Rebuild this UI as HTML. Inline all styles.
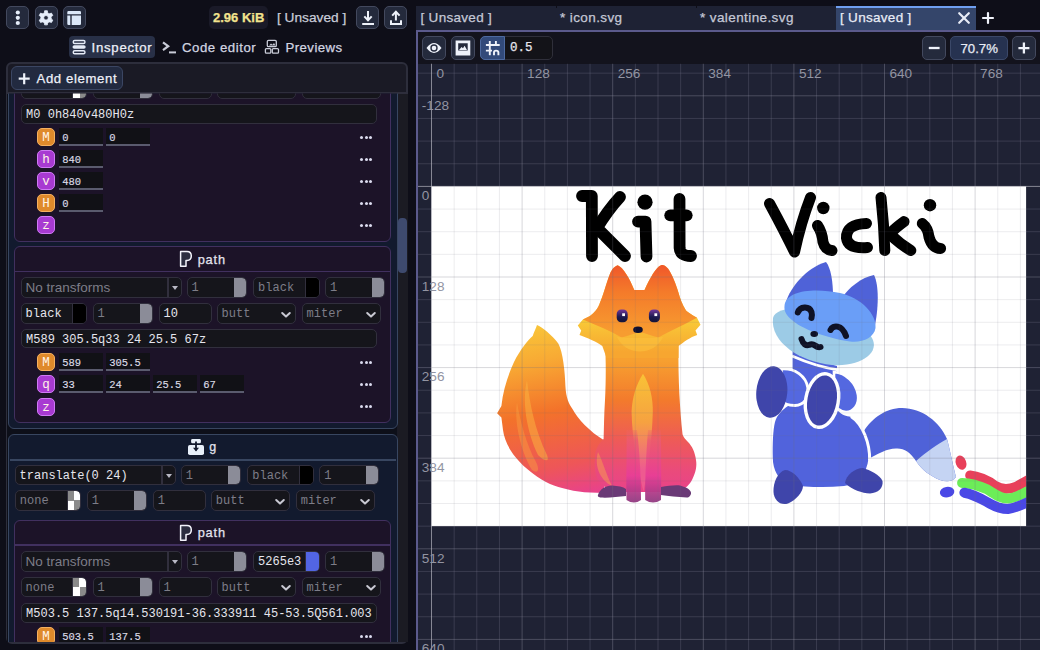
<!DOCTYPE html>
<html><head><meta charset="utf-8">
<style>
*{margin:0;padding:0;box-sizing:border-box}
html,body{width:1040px;height:650px;overflow:hidden;background:#0e0e18;font-family:"Liberation Sans",sans-serif}
.a{position:absolute}
.btn{position:absolute;background:#242a3c;border:1.5px solid #43495e;border-radius:5px}
.txt{position:absolute;white-space:nowrap;line-height:1;-webkit-text-stroke:0.25px currentColor}
.mono{font-family:"Liberation Mono",monospace}
.fld{position:absolute;background:#15151b;border:1.5px solid #312f3d;border-radius:5px;overflow:hidden}
.fld span{position:absolute;top:4px;white-space:nowrap;line-height:1;font-family:"Liberation Mono",monospace;font-size:12px}
.fld span.sans{font-family:"Liberation Sans",sans-serif;font-size:13.5px;top:2.5px}
.fld .sw{position:absolute;top:0;bottom:0;border-left:1.5px solid #312f3d}
.fld .ck{background:conic-gradient(#fff 0 25%,#8a8a8a 0 50%,#fff 0 75%,#8a8a8a 0);background-size:100% 100%;border-radius:0 4px 4px 0}
.fld .hd{position:absolute;top:0;bottom:0;border-radius:0 4px 4px 0}
.fld .ddsep{position:absolute;right:12px;top:0;bottom:0;width:1.5px;background:#312f3d}
.fld .ddarr{position:absolute;right:3px;top:8px;width:0;height:0;border-left:3.2px solid transparent;border-right:3.2px solid transparent;border-top:4.5px solid #b8b8c4}
.fld .chev{position:absolute;right:3px;top:6.5px}
.num{position:absolute;background:#111116;border-bottom:2px solid #5a5b6e}
.num span{position:absolute;left:3.2px;top:4.6px;white-space:nowrap;line-height:1;font-family:"Liberation Mono",monospace;font-size:10.5px;color:#dcdce6;-webkit-text-stroke:0.15px currentColor}
.bdg{position:absolute;width:18px;height:18px;border-radius:5px;font-family:"Liberation Mono",monospace;font-size:12.5px;line-height:19px;text-align:center;color:#fff3e6}
.bm{background:#df8a2b;border:1.5px solid #f4b060}
.bp{background:#a83ad2;border:1.5px solid #cf7af5}
.dots{position:absolute;width:14px;height:4px}
.dots i{position:absolute;top:0;width:3.2px;height:3.2px;border-radius:50%;background:#dadaee}
.gel{position:absolute;background:#121a2e;border:1.8px solid #384660;border-radius:6px}
.pel{position:absolute;background:#1c1328;border:1.5px solid #41305f;border-radius:6px}
.ehdr{position:absolute;left:15px;width:375px;height:1.5px;background:#41305f}
.ghdr{position:absolute;left:9.5px;width:386px;height:1.8px;background:#384660}
</style></head><body>
<div class="a" style="left:0;top:0;width:1040px;height:650px;overflow:hidden">

<!-- ===== LEFT TOP BAR ===== -->
<div class="btn" style="left:6px;top:6px;width:23px;height:23px"></div>
<div class="btn" style="left:34.5px;top:6px;width:23px;height:23px"></div>
<div class="btn" style="left:62.5px;top:6px;width:23px;height:23px"></div>

<div class="a" style="left:209px;top:6px;width:59px;height:23px;background:#1a1a28;border-radius:5px"></div>
<div class="txt" style="left:213px;top:11px;font-size:13px;font-weight:bold;color:#f2e38e">2.96 KiB</div>
<div class="txt" style="left:277px;top:11px;font-size:13.7px;color:#c9ccd8">[ Unsaved ]</div>
<div class="btn" style="left:356px;top:6px;width:23px;height:23px"></div>
<div class="btn" style="left:384px;top:6px;width:23px;height:23px"></div>

<!-- tabs -->
<div class="a" style="left:69px;top:36px;width:86px;height:22px;background:#283047;border-radius:4px"></div>
<div class="txt" style="left:91.5px;top:41px;font-size:13.2px;letter-spacing:0.75px;color:#eef0f8">Inspector</div>
<div class="txt" style="left:182px;top:41px;font-size:13.2px;letter-spacing:0.55px;color:#d2d5e0">Code editor</div>
<div class="txt" style="left:285.5px;top:41px;font-size:13.2px;letter-spacing:0.45px;color:#d2d5e0">Previews</div>

<!-- inspector frame -->
<div class="a" style="left:6px;top:62.3px;width:402px;height:582px;background:#1a1a25;border:2px solid #2d2e3c;border-radius:6px"></div>
<div class="a" style="left:7px;top:92px;width:400px;height:1.5px;background:#2e2e3c"></div>
<div class="a" style="left:11px;top:66px;width:112px;height:23.5px;background:#222a40;border:1.5px solid #3b4663;border-radius:6px"></div>
<div class="txt" style="left:36.5px;top:72px;font-size:13.2px;letter-spacing:0.6px;color:#eef0f8">Add element</div>


<!-- icons top bar -->
<svg class="a" style="left:0;top:0" width="420" height="100" viewBox="0 0 420 100">
<g fill="#e6eefa"><circle cx="17.8" cy="12.5" r="2.1"/><circle cx="17.8" cy="17.8" r="2.1"/><circle cx="17.8" cy="23" r="2.1"/></g>
<path fill="#e6eefa" fill-rule="evenodd" stroke="#e6eefa" stroke-width="0.8" stroke-linejoin="round" d="M43.50 13.47 L44.36 12.44 L44.63 10.73 L47.37 10.73 L47.64 12.44 L48.50 13.47 L49.82 13.70 L51.43 13.08 L52.81 15.46 L51.46 16.54 L51.00 17.80 L51.46 19.06 L52.81 20.14 L51.43 22.52 L49.82 21.90 L48.50 22.13 L47.64 23.16 L47.37 24.87 L44.63 24.87 L44.36 23.16 L43.50 22.13 L42.18 21.90 L40.57 22.52 L39.19 20.14 L40.54 19.06 L41.00 17.80 L40.54 16.54 L39.19 15.46 L40.57 13.08 L42.18 13.70 Z M46 15.5 A2.3 2.3 0 1 0 46 20.1 A2.3 2.3 0 1 0 46 15.5 Z"/>
<path fill="#dce8f8" d="M68.5 11 H79.8 Q81 11 81 12.2 V14.2 H67.3 V12.2 Q67.3 11 68.5 11 Z M67.3 15.6 H70.3 V25 H68.5 Q67.3 25 67.3 23.8 Z M71.7 15.6 H81 V23.8 Q81 25 79.8 25 H71.7 Z"/>
<g stroke="#eef2fa" stroke-width="2" fill="none" stroke-linecap="butt">
<path d="M368 11 V20"/><path d="M364.3 16.4 L368 20.3 L371.7 16.4" stroke-linejoin="miter"/><path d="M362.2 24 H374"/>
<path d="M395.9 12 V20.5"/><path d="M392.2 15.6 L395.9 11.8 L399.6 15.6"/><path d="M391 20.2 V24 H401 V20.2"/>
</g>
<!-- inspector tab icon -->
<g stroke="#e6ecf8" stroke-width="1.4" fill="none">
<rect x="73.2" y="40.5" width="11.8" height="3" rx="1.5"/>
<rect x="73.2" y="50.7" width="11.8" height="3" rx="1.5"/>
</g>
<rect x="72.5" y="45.2" width="13.2" height="3.6" rx="1.8" fill="#e6ecf8"/>
<!-- code editor icon -->
<path d="M163 42.3 L168.2 46.2 L163 50.1" stroke="#c9ccd8" stroke-width="2.2" fill="none" stroke-linejoin="miter"/>
<rect x="169" y="51.4" width="7" height="2" fill="#c9ccd8"/>
<!-- previews icon -->
<g stroke="#c9ccd8" stroke-width="1.3" fill="none">
<rect x="267.3" y="40.4" width="9" height="6.2" rx="1.2"/>
<rect x="265.4" y="48.6" width="5.4" height="4.6" rx="1"/>
<rect x="272.3" y="48.6" width="6.2" height="4.6" rx="1"/>
</g>
<path d="M269 45.5 L271 43.5 L272.5 44.8 L274 43 L275.5 45.5 Z" fill="#c9ccd8"/>
<!-- add element plus -->
<path d="M24.2 73.2 V84.2 M18.7 78.7 H29.7" stroke="#eef2fa" stroke-width="2.2"/>
</svg>

<!-- scroll content clip -->
<div class="a" style="left:0;top:0;width:1040px;height:650px;clip-path:inset(93.5px 642px 8px 7px)">
<div class="a" style="left:7px;top:93.5px;width:390px;height:549px;background:#0d0f19"></div>
<div class="gel" style="left:8px;top:40px;width:389.5px;height:388.8px"></div><div class="pel" style="left:13.8px;top:-30px;width:377.2px;height:271.8px"></div><div class="fld" style="left:20.6px;top:52.2px;width:161.0px;height:20.5px"><div class="ddsep"></div><div class="ddarr"></div><span class="sans" style="left:3.8px;color:#7d7d88">No transforms</span></div><div class="fld" style="left:186.6px;top:52.2px;width:60.0px;height:20.5px"><div class="hd" style="right:0;width:12px;background:#8b8c98"></div><span class="" style="left:4px;color:#7d7d88">1</span></div><div class="fld" style="left:253.1px;top:52.2px;width:66.5px;height:20.5px"><div class="sw" style="right:0;width:13.5px;background:#000"></div><span class="" style="left:4px;color:#7d7d88">black</span></div><div class="fld" style="left:325.1px;top:52.2px;width:59.5px;height:20.5px"><div class="hd" style="right:0;width:12px;background:#8b8c98"></div><span class="" style="left:4px;color:#7d7d88">1</span></div><div class="fld" style="left:20.6px;top:78.0px;width:66.3px;height:20.5px"><div class="sw ck" style="right:0;width:13.5px"></div><span class="" style="left:4px;color:#7d7d88">none</span></div><div class="fld" style="left:92.6px;top:78.0px;width:60.0px;height:20.5px"><div class="hd" style="right:0;width:12px;background:#8b8c98"></div><span class="" style="left:4px;color:#7d7d88">1</span></div><div class="fld" style="left:158.6px;top:78.0px;width:53.0px;height:20.5px"><span class="" style="left:4px;color:#7d7d88">1</span></div><div class="fld" style="left:216.6px;top:78.0px;width:79.3px;height:20.5px"><svg class="chev" width="12" height="8" viewBox="0 0 12 8"><path d="M2.2 2 L6 5.6 L9.8 2" fill="none" stroke="#c8c8d2" stroke-width="2" stroke-linecap="round" stroke-linejoin="round"/></svg><span class="" style="left:4px;color:#7d7d88">butt</span></div><div class="fld" style="left:301.6px;top:78.0px;width:79.7px;height:20.5px"><svg class="chev" width="12" height="8" viewBox="0 0 12 8"><path d="M2.2 2 L6 5.6 L9.8 2" fill="none" stroke="#c8c8d2" stroke-width="2" stroke-linecap="round" stroke-linejoin="round"/></svg><span class="" style="left:4px;color:#7d7d88">miter</span></div><div class="fld" style="left:20.6px;top:104.4px;width:356.5px;height:19.5px"><span class="" style="left:4.5px;color:#e6e6ee">M0 0h840v480H0z</span></div><div class="bdg bm" style="left:37px;top:128.2px">M</div><div class="num" style="left:59px;top:128.2px;width:44px;height:18px"><span>0</span></div><div class="num" style="left:106px;top:128.2px;width:44px;height:18px"><span>0</span></div><div class="dots" style="left:360.2px;top:135.6px"><i style="left:0"></i><i style="left:4.5px"></i><i style="left:9px"></i></div><div class="bdg bp" style="left:37px;top:150.2px">h</div><div class="num" style="left:59px;top:150.2px;width:44px;height:18px"><span>840</span></div><div class="dots" style="left:360.2px;top:157.6px"><i style="left:0"></i><i style="left:4.5px"></i><i style="left:9px"></i></div><div class="bdg bp" style="left:37px;top:172.2px">v</div><div class="num" style="left:59px;top:172.2px;width:44px;height:18px"><span>480</span></div><div class="dots" style="left:360.2px;top:179.6px"><i style="left:0"></i><i style="left:4.5px"></i><i style="left:9px"></i></div><div class="bdg bm" style="left:37px;top:194.2px">H</div><div class="num" style="left:59px;top:194.2px;width:44px;height:18px"><span>0</span></div><div class="dots" style="left:360.2px;top:201.6px"><i style="left:0"></i><i style="left:4.5px"></i><i style="left:9px"></i></div><div class="bdg bp" style="left:37px;top:216.2px">z</div><div class="dots" style="left:360.2px;top:223.6px"><i style="left:0"></i><i style="left:4.5px"></i><i style="left:9px"></i></div><div class="pel" style="left:13.8px;top:246.2px;width:377.2px;height:176.6px"></div><div class="ehdr" style="top:270.5px"></div><svg class="a" style="left:0;top:0.3px" width="240" height="280" viewBox="0 0 240 280"><path d="M180.6 251.6 H187 Q191.3 251.6 191.3 256 Q191.3 260.4 187 260.4 H186 V266.3 H180.6 Z" fill="#2c2d40" stroke="#f2f2fa" stroke-width="1.5" stroke-linejoin="round"/></svg><div class="txt" style="left:197.7px;top:253.5px;font-size:12.8px;letter-spacing:0.8px;color:#e4e4ee">path</div><div class="fld" style="left:20.6px;top:277.3px;width:161.0px;height:20.5px"><div class="ddsep"></div><div class="ddarr"></div><span class="sans" style="left:3.8px;color:#7d7d88">No transforms</span></div><div class="fld" style="left:186.6px;top:277.3px;width:60.0px;height:20.5px"><div class="hd" style="right:0;width:12px;background:#8b8c98"></div><span class="" style="left:4px;color:#7d7d88">1</span></div><div class="fld" style="left:253.1px;top:277.3px;width:66.5px;height:20.5px"><div class="sw" style="right:0;width:13.5px;background:#000"></div><span class="" style="left:4px;color:#7d7d88">black</span></div><div class="fld" style="left:325.1px;top:277.3px;width:59.5px;height:20.5px"><div class="hd" style="right:0;width:12px;background:#8b8c98"></div><span class="" style="left:4px;color:#7d7d88">1</span></div><div class="fld" style="left:20.6px;top:303.1px;width:66.3px;height:20.5px"><div class="sw" style="right:0;width:13.5px;background:#000"></div><span class="" style="left:4px;color:#e6e6ee">black</span></div><div class="fld" style="left:92.6px;top:303.1px;width:60.0px;height:20.5px"><div class="hd" style="right:0;width:12px;background:#8b8c98"></div><span class="" style="left:4px;color:#7d7d88">1</span></div><div class="fld" style="left:158.6px;top:303.1px;width:53.0px;height:20.5px"><span class="" style="left:4px;color:#e6e6ee">10</span></div><div class="fld" style="left:216.6px;top:303.1px;width:79.3px;height:20.5px"><svg class="chev" width="12" height="8" viewBox="0 0 12 8"><path d="M2.2 2 L6 5.6 L9.8 2" fill="none" stroke="#c8c8d2" stroke-width="2" stroke-linecap="round" stroke-linejoin="round"/></svg><span class="" style="left:4px;color:#7d7d88">butt</span></div><div class="fld" style="left:301.6px;top:303.1px;width:79.7px;height:20.5px"><svg class="chev" width="12" height="8" viewBox="0 0 12 8"><path d="M2.2 2 L6 5.6 L9.8 2" fill="none" stroke="#c8c8d2" stroke-width="2" stroke-linecap="round" stroke-linejoin="round"/></svg><span class="" style="left:4px;color:#7d7d88">miter</span></div><div class="fld" style="left:20.6px;top:328.7px;width:356.5px;height:19.5px"><span class="" style="left:4.5px;color:#e6e6ee">M589 305.5q33 24 25.5 67z</span></div><div class="bdg bm" style="left:37px;top:353.2px">M</div><div class="num" style="left:59px;top:353.2px;width:44px;height:18px"><span>589</span></div><div class="num" style="left:106px;top:353.2px;width:44px;height:18px"><span>305.5</span></div><div class="dots" style="left:360.2px;top:360.6px"><i style="left:0"></i><i style="left:4.5px"></i><i style="left:9px"></i></div><div class="bdg bp" style="left:37px;top:375.4px">q</div><div class="num" style="left:59px;top:375.4px;width:44px;height:18px"><span>33</span></div><div class="num" style="left:106px;top:375.4px;width:44px;height:18px"><span>24</span></div><div class="num" style="left:153px;top:375.4px;width:44px;height:18px"><span>25.5</span></div><div class="num" style="left:200px;top:375.4px;width:44px;height:18px"><span>67</span></div><div class="dots" style="left:360.2px;top:382.8px"><i style="left:0"></i><i style="left:4.5px"></i><i style="left:9px"></i></div><div class="bdg bp" style="left:37px;top:397.6px">z</div><div class="dots" style="left:360.2px;top:405.0px"><i style="left:0"></i><i style="left:4.5px"></i><i style="left:9px"></i></div><div class="gel" style="left:8px;top:434px;width:389.5px;height:260px"></div><div class="ghdr" style="top:458.8px"></div><svg class="a" style="left:0;top:0" width="240" height="470" viewBox="0 0 240 470"><rect x="191.1" y="439" width="9.8" height="4.2" rx="1.3" fill="#e8f0fa"/><rect x="188" y="445" width="16" height="10" rx="1.8" fill="#e8f0fa"/><path d="M196 441.5 V450.5" stroke="#121a2e" stroke-width="1.8"/><path d="M193 447.8 L196 451.5 L199 447.8 Z" fill="#121a2e"/></svg><div class="txt" style="left:209.3px;top:441.2px;font-size:12.5px;color:#e4e4ee">g</div><div class="fld" style="left:14.8px;top:464.6px;width:161.0px;height:20.5px"><div class="ddsep"></div><div class="ddarr"></div><span class="" style="left:3.8px;color:#e6e6ee">translate(0 24)</span></div><div class="fld" style="left:180.8px;top:464.6px;width:60.0px;height:20.5px"><div class="hd" style="right:0;width:12px;background:#8b8c98"></div><span class="" style="left:4px;color:#7d7d88">1</span></div><div class="fld" style="left:247.3px;top:464.6px;width:66.5px;height:20.5px"><div class="sw" style="right:0;width:13.5px;background:#000"></div><span class="" style="left:4px;color:#7d7d88">black</span></div><div class="fld" style="left:319.3px;top:464.6px;width:59.5px;height:20.5px"><div class="hd" style="right:0;width:12px;background:#8b8c98"></div><span class="" style="left:4px;color:#7d7d88">1</span></div><div class="fld" style="left:14.8px;top:490.4px;width:66.3px;height:20.5px"><div class="sw ck" style="right:0;width:13.5px"></div><span class="" style="left:4px;color:#7d7d88">none</span></div><div class="fld" style="left:86.8px;top:490.4px;width:60.0px;height:20.5px"><div class="hd" style="right:0;width:12px;background:#8b8c98"></div><span class="" style="left:4px;color:#7d7d88">1</span></div><div class="fld" style="left:152.8px;top:490.4px;width:53.0px;height:20.5px"><span class="" style="left:4px;color:#7d7d88">1</span></div><div class="fld" style="left:210.8px;top:490.4px;width:79.3px;height:20.5px"><svg class="chev" width="12" height="8" viewBox="0 0 12 8"><path d="M2.2 2 L6 5.6 L9.8 2" fill="none" stroke="#c8c8d2" stroke-width="2" stroke-linecap="round" stroke-linejoin="round"/></svg><span class="" style="left:4px;color:#7d7d88">butt</span></div><div class="fld" style="left:295.8px;top:490.4px;width:79.7px;height:20.5px"><svg class="chev" width="12" height="8" viewBox="0 0 12 8"><path d="M2.2 2 L6 5.6 L9.8 2" fill="none" stroke="#c8c8d2" stroke-width="2" stroke-linecap="round" stroke-linejoin="round"/></svg><span class="" style="left:4px;color:#7d7d88">miter</span></div><div class="pel" style="left:13.8px;top:519.8px;width:377.2px;height:200px"></div><div class="ehdr" style="top:544.2px"></div><svg class="a" style="left:0;top:274.0px" width="240" height="280" viewBox="0 0 240 280"><path d="M180.6 251.6 H187 Q191.3 251.6 191.3 256 Q191.3 260.4 187 260.4 H186 V266.3 H180.6 Z" fill="#2c2d40" stroke="#f2f2fa" stroke-width="1.5" stroke-linejoin="round"/></svg><div class="txt" style="left:197.7px;top:527.2px;font-size:12.8px;letter-spacing:0.8px;color:#e4e4ee">path</div><div class="fld" style="left:20.6px;top:551.0px;width:161.0px;height:20.5px"><div class="ddsep"></div><div class="ddarr"></div><span class="sans" style="left:3.8px;color:#7d7d88">No transforms</span></div><div class="fld" style="left:186.6px;top:551.0px;width:60.0px;height:20.5px"><div class="hd" style="right:0;width:12px;background:#8b8c98"></div><span class="" style="left:4px;color:#7d7d88">1</span></div><div class="fld" style="left:253.1px;top:551.0px;width:66.5px;height:20.5px"><div class="sw" style="right:0;width:13.5px;background:#5265e3"></div><span class="" style="left:4px;color:#e6e6ee">5265e3</span></div><div class="fld" style="left:325.1px;top:551.0px;width:59.5px;height:20.5px"><div class="hd" style="right:0;width:12px;background:#8b8c98"></div><span class="" style="left:4px;color:#7d7d88">1</span></div><div class="fld" style="left:20.6px;top:576.8px;width:66.3px;height:20.5px"><div class="sw ck" style="right:0;width:13.5px"></div><span class="" style="left:4px;color:#7d7d88">none</span></div><div class="fld" style="left:92.6px;top:576.8px;width:60.0px;height:20.5px"><div class="hd" style="right:0;width:12px;background:#8b8c98"></div><span class="" style="left:4px;color:#7d7d88">1</span></div><div class="fld" style="left:158.6px;top:576.8px;width:53.0px;height:20.5px"><span class="" style="left:4px;color:#7d7d88">1</span></div><div class="fld" style="left:216.6px;top:576.8px;width:79.3px;height:20.5px"><svg class="chev" width="12" height="8" viewBox="0 0 12 8"><path d="M2.2 2 L6 5.6 L9.8 2" fill="none" stroke="#c8c8d2" stroke-width="2" stroke-linecap="round" stroke-linejoin="round"/></svg><span class="" style="left:4px;color:#7d7d88">butt</span></div><div class="fld" style="left:301.6px;top:576.8px;width:79.7px;height:20.5px"><svg class="chev" width="12" height="8" viewBox="0 0 12 8"><path d="M2.2 2 L6 5.6 L9.8 2" fill="none" stroke="#c8c8d2" stroke-width="2" stroke-linecap="round" stroke-linejoin="round"/></svg><span class="" style="left:4px;color:#7d7d88">miter</span></div><div class="fld" style="left:20.6px;top:603.0px;width:356.5px;height:19.5px"><span class="" style="left:4.5px;color:#e6e6ee">M503.5 137.5q14.530191-36.333911 45-53.5Q561.003</span></div><div class="bdg bm" style="left:37px;top:627.3px">M</div><div class="num" style="left:59px;top:627.3px;width:44px;height:18px"><span>503.5</span></div><div class="num" style="left:106px;top:627.3px;width:44px;height:18px"><span>137.5</span></div><div class="dots" style="left:360.2px;top:634.7px"><i style="left:0"></i><i style="left:4.5px"></i><i style="left:9px"></i></div>
</div>
<!-- scrollbar -->
<div class="a" style="left:398px;top:93.5px;width:9.5px;height:548.5px;background:#1b1b23"></div>
<div class="a" style="left:397.5px;top:217.5px;width:9px;height:55px;background:#3e4a6e;border-radius:4px"></div>

<!-- ===== RIGHT SIDE ===== -->
<!-- tab bar -->
<div class="a" style="left:416px;top:6px;width:560px;height:24px;background:#1e2234"></div>
<div class="a" style="left:555.5px;top:6px;width:1px;height:2px;background:#0e0e18"></div>
<div class="a" style="left:695.5px;top:6px;width:1px;height:2px;background:#0e0e18"></div>
<div class="a" style="left:836px;top:6px;width:140px;height:24px;background:#34456a"></div>
<div class="a" style="left:836px;top:6px;width:140px;height:2px;background:#6f9ff0"></div>
<div class="txt" style="left:420.5px;top:11px;font-size:13.5px;letter-spacing:0.3px;color:#c5c8d6">[ Unsaved ]</div>
<div class="txt" style="left:560px;top:11px;font-size:13.5px;letter-spacing:0.4px;color:#c5c8d6">* icon.svg</div>
<div class="txt" style="left:700px;top:11px;font-size:13.5px;letter-spacing:0.4px;color:#c5c8d6">* valentine.svg</div>
<div class="txt" style="left:840px;top:11px;font-size:13.5px;letter-spacing:0.3px;color:#e8ecf6">[ Unsaved ]</div>
<svg class="a" style="left:957px;top:11px" width="14" height="14" viewBox="0 0 14 14"><path d="M2.2 2.2 L11.8 11.8 M11.8 2.2 L2.2 11.8" stroke="#e8ecf6" stroke-width="2.2" stroke-linecap="round"/></svg>
<svg class="a" style="left:981px;top:11px" width="14" height="14" viewBox="0 0 14 14"><path d="M7 2 V12 M2 7 H12" stroke="#f0f2fa" stroke-width="2.2" stroke-linecap="round"/></svg>
<div class="a" style="left:416px;top:30px;width:624px;height:2px;background:#5b5a8c"></div>
<!-- viewport -->
<div class="a" style="left:416px;top:32px;width:2px;height:618px;background:#5b5a8c"></div>
<div class="a" style="left:418px;top:32px;width:622px;height:31.5px;background:#13131d"></div>
<div class="a" style="left:418px;top:63.5px;width:622px;height:586.5px;background:#1f2234;overflow:hidden" id="vp"></div>
<!-- toolbar -->
<div class="btn" style="left:422px;top:36px;width:23.5px;height:23.5px"></div>
<div class="btn" style="left:451px;top:36px;width:23.5px;height:23.5px"></div>
<div class="a" style="left:480px;top:36px;width:72.5px;height:23.5px;background:#131318;border:1.5px solid #2f2f3a;border-radius:5px"></div>
<div class="a" style="left:480px;top:36px;width:25px;height:23.5px;background:#324a7a;border:1.5px solid #4d6aa0;border-radius:5px 0 0 5px"></div>
<div class="txt mono" style="left:510px;top:42px;font-size:12.5px;color:#e6e6ee">0.5</div>
<div class="btn" style="left:922px;top:36px;width:24px;height:24px"></div>
<div class="btn" style="left:950px;top:36px;width:58px;height:24px;background:#263250;border-color:#3b4868"></div>
<div class="txt" style="left:960.5px;top:42px;font-size:13.2px;color:#e8ecf6">70.7%</div>
<div class="btn" style="left:1012px;top:36px;width:24px;height:24px"></div>

<svg class="a" style="left:0;top:0" width="1040" height="650" viewBox="0 0 1040 650"><defs><clipPath id="vpc"><rect x="418" y="63.5" width="622" height="586.5"/></clipPath><clipPath id="cvc"><rect x="431.5" y="186.4" width="594.6" height="339.7"/></clipPath><linearGradient id="kitg" x1="0" y1="263" x2="0" y2="500" gradientUnits="userSpaceOnUse"><stop offset="0" stop-color="#f0542a"/><stop offset="0.12" stop-color="#f47a2a"/><stop offset="0.29" stop-color="#f79c30"/><stop offset="0.41" stop-color="#f7a030"/><stop offset="0.58" stop-color="#f37a2c"/><stop offset="0.75" stop-color="#ee5a58"/><stop offset="0.88" stop-color="#ea4a7c"/><stop offset="1" stop-color="#e8408e"/></linearGradient><linearGradient id="tailg" x1="540" y1="325" x2="575" y2="495" gradientUnits="userSpaceOnUse"><stop offset="0" stop-color="#f9c438"/><stop offset="0.2" stop-color="#f8aa34"/><stop offset="0.5" stop-color="#f3722a"/><stop offset="0.82" stop-color="#ee5658"/><stop offset="1" stop-color="#e8428a"/></linearGradient><linearGradient id="muzg" x1="0" y1="318" x2="0" y2="352" gradientUnits="userSpaceOnUse"><stop offset="0" stop-color="#f9cc38"/><stop offset="1" stop-color="#f7a630"/></linearGradient><linearGradient id="chestg" x1="0" y1="374" x2="0" y2="470" gradientUnits="userSpaceOnUse"><stop offset="0" stop-color="#f9c236"/><stop offset="0.5" stop-color="#f6a240"/><stop offset="1" stop-color="#ee5a90"/></linearGradient><linearGradient id="legg" x1="0" y1="425" x2="0" y2="503" gradientUnits="userSpaceOnUse"><stop offset="0" stop-color="#ee6a5a" stop-opacity="0"/><stop offset="0.2" stop-color="#ec5a70" stop-opacity="0.9"/><stop offset="0.65" stop-color="#e83e96"/><stop offset="1" stop-color="#8e3a80"/></linearGradient><linearGradient id="eyeg" x1="0" y1="309" x2="0" y2="322" gradientUnits="userSpaceOnUse"><stop offset="0" stop-color="#7a3aa0"/><stop offset="0.6" stop-color="#1c1a50"/><stop offset="1" stop-color="#141438"/></linearGradient><linearGradient id="vtailtip" x1="920" y1="440" x2="956" y2="478" gradientUnits="userSpaceOnUse"><stop offset="0" stop-color="#bccdf2"/><stop offset="1" stop-color="#d4e0f8"/></linearGradient></defs><g clip-path="url(#vpc)"><path d="M454.15 63.5V650 M476.80 63.5V650 M499.45 63.5V650 M544.75 63.5V650 M567.40 63.5V650 M590.05 63.5V650 M635.35 63.5V650 M658.00 63.5V650 M680.65 63.5V650 M725.95 63.5V650 M748.60 63.5V650 M771.25 63.5V650 M816.55 63.5V650 M839.20 63.5V650 M861.85 63.5V650 M907.15 63.5V650 M929.80 63.5V650 M952.45 63.5V650 M997.75 63.5V650 M1020.40 63.5V650 M418 73.15H1040 M418 118.45H1040 M418 141.10H1040 M418 163.75H1040 M418 209.05H1040 M418 231.70H1040 M418 254.35H1040 M418 299.65H1040 M418 322.30H1040 M418 344.95H1040 M418 390.25H1040 M418 412.90H1040 M418 435.55H1040 M418 480.85H1040 M418 503.50H1040 M418 526.15H1040 M418 571.45H1040 M418 594.10H1040 M418 616.75H1040" stroke="rgba(120,120,140,0.30)" stroke-width="1" fill="none"/><path d="M522.10 63.5V650 M612.70 63.5V650 M703.30 63.5V650 M793.90 63.5V650 M884.50 63.5V650 M975.10 63.5V650 M418 95.80H1040 M418 277.00H1040 M418 367.60H1040 M418 458.20H1040 M418 548.80H1040 M418 639.40H1040" stroke="rgba(140,140,158,0.40)" stroke-width="1" fill="none"/><path d="M431.50 63.5V650 M418 186.40H1040" stroke="rgba(190,190,200,0.65)" stroke-width="1" fill="none"/><rect x="431.5" y="186.4" width="594.6" height="339.7" fill="#ffffff"/><g clip-path="url(#cvc)"><!-- KIT text -->
<g fill="none" stroke="#000" stroke-width="11.8" stroke-linecap="round" stroke-linejoin="round">
<path d="M582 196 L591.8 196 L592 256"/>
<path d="M620 197 Q608 210 597 228 L625 256"/>
<path d="M638 221.6 L645.5 221.6 L646.5 256.5"/>
<path d="M679.5 199 L679.6 248 Q680 256 691 256"/>
<path d="M670.2 215.3 L686.7 215.3"/>
</g>
<circle cx="645" cy="202.2" r="7.6" fill="#000"/>
<!-- VICKI text -->
<g fill="none" stroke="#000" stroke-width="11" stroke-linecap="round" stroke-linejoin="round">
<path d="M769.5 203.5 Q785 232 794.5 252 Q801 222 810.5 197.5"/>
<path d="M817.5 225.5 Q822 232 823 242 Q825 250 832 250.5"/>
<path d="M866.5 223.5 Q846 224 846.5 238 Q848 249 867.5 247.5"/>
<path d="M881 197.5 Q884 225 884.8 250.5"/>
<path d="M904 221.6 Q894 229 889.6 234 Q900 244 910.8 250.4"/>
<path d="M922.3 223.5 Q928 228 929 237 Q932 248 940.6 248.5"/>
</g>
<circle cx="823.3" cy="208" r="6.2" fill="#000"/>
<circle cx="930" cy="205.2" r="6.2" fill="#000"/>

<!-- KIT fox -->
<!-- tail -->
<path d="M537 325 C542 327 552 335 558.3 343.5 C563 352 565 372 565.4 386 C566 398 569 404 572.5 409 C577 418 590 432 604 440.2 L604 493 L590 492.5 C575 492 560 488 550 484 C540 480 524 468 515.6 457.3 C508 448 504 438 503 430 L501.4 417.4 L497.1 413.2 L501.4 406 C503 390 508 375 514 362 C520 350 528 340 532.7 336 C534 332 536 328 537 325 Z" fill="url(#tailg)"/>
<path d="M527 380 C522 400 526 430 538 455 C545 462 550 462 547 455 C535 430 530 405 527 380 Z" fill="#f9b040" opacity="0.55"/>
<path d="M517 402 C514 420 520 450 532 470 C538 474 540 470 536 462 C526 444 520 420 517 402 Z" fill="#f9a040" opacity="0.45"/>
<!-- body -->
<path d="M605 345 C606 360 606 380 605 400 C604 415 604 428 603.6 439 C598 444 595 450 595 458 C594 470 596 478 600 482 C603 486 607 489 612 492 L680 492 C686 488 690 484 692 480 C696 472 697 466 696 460 C695 452 692 446 688 442 C684 438 683 436 682.5 434 C680 410 678 380 678.5 345 Z" fill="url(#kitg)"/>
<path d="M598 452 C594 466 600 480 612 486 C606 474 603 462 598 452 Z" fill="#f7a050" opacity="0.5"/>
<!-- chest -->
<path d="M643 373.8 C636 385 632 398 631.6 412 C632 440 638 470 643.5 491.5 C648 470 652 440 652.8 412 C653 398 650 385 643 373.8 Z" fill="url(#chestg)"/>
<!-- legs -->
<path d="M626.5 430 C627 455 626 480 626.5 500 Q634 505 641 500 C641 480 640 455 637 430 Z" fill="url(#legg)" opacity="0.95"/>
<path d="M648 430 C646 455 645 480 645.2 500 Q653 505 661 500 C661.5 480 661 455 661 430 Z" fill="url(#legg)" opacity="0.95"/>
<!-- feet -->
<path d="M598 495 C600 489 606 485.5 612 485.6 C618 486 623 487 626 489 L626 496 C618 497 608 498 600.3 497.5 C598 497 597.5 496 598 495 Z" fill="#6a3a76"/>
<path d="M661 487 C668 486 674 485 680 485.5 C686 487 692 490 691 494 C690 497 688 497.5 686.7 497.5 C678 497 668 496 661 495 Z" fill="#6a3a76"/>
<!-- head -->
<path d="M617.7 265.2 C613 267 611 271 609.5 275 C606 284 603 296 600.2 302 C598 309 594 313 590 316 L582.9 319.6 L577.8 325.6 L581.2 330.6 L579.5 334.9 C588 338 597 342 602.3 345.9 L606.6 358 L678.5 358 L678.5 345.9 C684 342 690 337 697.2 334.9 L695.5 330.6 L700.5 324.7 L697 317.8 C692 315 688 312 686 310.4 C682 304 680 298 678.6 293 C676 284 672 274 668 268.5 C665 265 663 264.5 661 265.2 C656 267 650 278 644.5 290 L634.3 290 C630 279 623 267 617.7 265.2 Z" fill="url(#muzg)"/>
<path d="M617.7 265.2 C613 267 611 271 609.5 275 C606 284 603 296 600.2 302 C598 309 594 313 590 316 L582.9 319.6 C596 325 610 331 621.5 337.5 C628 336 634 333 640 332.5 C646 333 652 336 658.5 337.5 C670 331 686 324 697 317.8 C692 315 688 312 686 310.4 C682 304 680 298 678.6 293 C676 284 672 274 668 268.5 C665 265 663 264.5 661 265.2 C656 267 650 278 644.5 290 L634.3 290 C630 279 623 267 617.7 265.2 Z" fill="url(#kitg)"/>
<path d="M617 337 C626 338 634 338 640 338 C646 338 654 338 663 337 C659 346 650 351.5 640 351.5 C630 351.5 621 346 617 337 Z" fill="#fbc23e" opacity="0.6"/>
<!-- eyes -->
<rect x="616.7" y="309.5" width="11" height="12.7" rx="4.5" fill="url(#eyeg)"/>
<rect x="648.9" y="309.5" width="11" height="12.7" rx="4.5" fill="url(#eyeg)"/>
<rect x="622.2" y="313.3" width="2.8" height="2.8" fill="#fff"/>
<rect x="654.4" y="313.3" width="2.8" height="2.8" fill="#fff"/>
<ellipse cx="638" cy="329.8" rx="4.8" ry="3.3" fill="#0e1030"/>
<!-- VICKI fox -->
<!-- tail -->
<path d="M864 431 C872 418 886 408 902 408 C922 408 940 422 947 439 C950 450 953 466 956 477 C953 482 946 482 940 480 C930 476 922 470 916 461 C910 452 904 448 896 448.5 C886 449 880 453 872 457 L866 460 Z" fill="#4f62d8"/>
<path d="M916 461 C926 452 938 444 947 439 C950 450 953 466 956 477 C953 482 946 482 940 480 C930 476 922 470 916 461 Z" fill="#c5d4f3"/>
<!-- body -->
<path d="M793.2 352 L830 362 L837 369 L838 411 C842 415 846 416 851 417 C856 419 858 421 860 424 C866 434 869 446 868.5 458 C867 474 858 484 844 486 C825 488 805 487 790 485 C778 480 773 470 772.8 458 C772.5 444 773 430 775 422 C777 415 782 410 788 406 L793.2 367 Z" fill="#5163dc"/>
<path d="M851 416.5 C863 424 870 444 869.6 460" fill="none" stroke="#fff" stroke-width="3"/>
<!-- neck -->
<path d="M792.6 350 L792.6 372 L837 372 L837 366 C825 362 805 356 792.6 350 Z" fill="#5163dc"/>
<!-- right arm -->
<path d="M834 372 C846 373 856 383 858 395 C859.5 405 853 412 846 412 C840 411.5 836 408 834 403 Z" fill="#5468e0" stroke="#fff" stroke-width="2.6"/>
<!-- left arm -->
<path d="M781.5 369 C795 368 806 376 807.9 388 C809 398 804 405 795 405.5 C788 405.5 783 403 781 400 Z" fill="#5468e0" stroke="#fff" stroke-width="2.8"/>
<!-- left paw -->
<ellipse cx="771.8" cy="392" rx="15.5" ry="25.8" transform="rotate(5 771.8 392)" fill="#3f45aa"/>
<!-- right paw with white outline -->
<ellipse cx="822" cy="400.5" rx="16.3" ry="27" transform="rotate(10 822 400.5)" fill="#3f45aa" stroke="#fff" stroke-width="3.4"/>
<!-- feet -->
<path d="M773.5 492 C773 482 778 472 785 470 C792 470 800 478 803 486 C803 492 796 500 788 503.5 C780 506 774 500 773.5 492 Z" fill="#3f45aa"/>
<path d="M845 483 C846 475 855 468 863 468 C870 470 880 475 882.5 481 C883.5 488 878 493 870 493.5 C862 493 852 490 845 483 Z" fill="#3f45aa"/>
<!-- ears -->
<path d="M786 302 C790 288 806 268 826 262 C831 268 833 282 833 296 Z" fill="#4f62d8"/>
<path d="M841 299 C848 288 862 277 874 275 C879 285 879 308 874 330 Z" fill="#4f62d8"/>
<!-- muzzle -->
<path d="M773 318 C776 300 852 306 872 338 C880 352 862 367 832 365 C800 362 770 342 773 318 Z" fill="#9ccbe6"/>
<!-- collar white line -->
<path d="M792 356 C808 363 824 368 839 370" fill="none" stroke="#fff" stroke-width="3"/>
<!-- head -->
<path d="M784.5 306 C786 290 815 288 840 293 C862 298 877 315 875.5 328 C874 338 862 343 850 341.5 C826 338 800 328 792 320 C786 315 784 311 784.5 306 Z" fill="#6a9ef7"/>
<!-- face -->
<g fill="none" stroke="#0f1226" stroke-width="6" stroke-linecap="round" stroke-linejoin="round">
<path d="M797.8 312.5 C800 306.5 809 305.5 811.5 312 C812.2 314.5 812 316.5 811.5 318"/>
<path d="M830.5 330 C833 324.5 842 324.5 846 336"/>
<path d="M801.5 339 C803 344 806 346 809 345 C811 344 813 344 815 345.5 C817 347 819 347.5 820.5 347"/>
</g>
<ellipse cx="814.2" cy="334" rx="3.8" ry="3" fill="#0f1226"/>
<!-- rainbow -->
<g fill="none" stroke-width="10" stroke-linecap="round">
<path d="M970.2 475.4 C977 476 988 480 995 485.8 C1000 489 1008 490 1015.8 487 C1020 485 1024 482 1030 479" stroke="#e8405a"/>
<path d="M962.1 482.9 C970 483 980 486 987 489.3 C995 494 1000 498.5 1008 498.5 C1016 498 1022 494 1030 490" stroke="#6ced58"/>
<path d="M964.4 492.7 C972 494 980 498 987 502 C995 507 1000 509 1008 509 C1016 508 1022 505 1030 501" stroke="#4a48e6"/>
</g>
<ellipse cx="961" cy="462.7" rx="5.2" ry="7.3" transform="rotate(-20 961 462.7)" fill="#e8405a"/>
<ellipse cx="947.1" cy="492.1" rx="7.3" ry="5.3" transform="rotate(-10 947.1 492.1)" fill="#4a48e6"/>
<path d="M454.15 63.5V650 M476.80 63.5V650 M499.45 63.5V650 M544.75 63.5V650 M567.40 63.5V650 M590.05 63.5V650 M635.35 63.5V650 M658.00 63.5V650 M680.65 63.5V650 M725.95 63.5V650 M748.60 63.5V650 M771.25 63.5V650 M816.55 63.5V650 M839.20 63.5V650 M861.85 63.5V650 M907.15 63.5V650 M929.80 63.5V650 M952.45 63.5V650 M997.75 63.5V650 M1020.40 63.5V650 M418 73.15H1040 M418 118.45H1040 M418 141.10H1040 M418 163.75H1040 M418 209.05H1040 M418 231.70H1040 M418 254.35H1040 M418 299.65H1040 M418 322.30H1040 M418 344.95H1040 M418 390.25H1040 M418 412.90H1040 M418 435.55H1040 M418 480.85H1040 M418 503.50H1040 M418 526.15H1040 M418 571.45H1040 M418 594.10H1040 M418 616.75H1040" stroke="rgba(110,110,125,0.13)" stroke-width="1" fill="none"/><path d="M522.10 63.5V650 M612.70 63.5V650 M703.30 63.5V650 M793.90 63.5V650 M884.50 63.5V650 M975.10 63.5V650 M418 95.80H1040 M418 277.00H1040 M418 367.60H1040 M418 458.20H1040 M418 548.80H1040 M418 639.40H1040" stroke="rgba(110,110,125,0.28)" stroke-width="1" fill="none"/><path d="M431.50 63.5V650 M418 186.40H1040" stroke="rgba(110,110,125,0.28)" stroke-width="1" fill="none"/></g><text x="436.5" y="77.9" font-family="Liberation Sans" font-size="13.6" fill="#9294a2">0</text><text x="527.1" y="77.9" font-family="Liberation Sans" font-size="13.6" fill="#9294a2">128</text><text x="617.7" y="77.9" font-family="Liberation Sans" font-size="13.6" fill="#9294a2">256</text><text x="708.3" y="77.9" font-family="Liberation Sans" font-size="13.6" fill="#9294a2">384</text><text x="798.9" y="77.9" font-family="Liberation Sans" font-size="13.6" fill="#9294a2">512</text><text x="889.5" y="77.9" font-family="Liberation Sans" font-size="13.6" fill="#9294a2">640</text><text x="980.1" y="77.9" font-family="Liberation Sans" font-size="13.6" fill="#9294a2">768</text><text x="421.8" y="109.6" font-family="Liberation Sans" font-size="13.6" fill="#9294a2">-128</text><text x="421.8" y="200.2" font-family="Liberation Sans" font-size="13.6" fill="#9294a2">0</text><text x="421.8" y="290.8" font-family="Liberation Sans" font-size="13.6" fill="#9294a2">128</text><text x="421.8" y="381.4" font-family="Liberation Sans" font-size="13.6" fill="#9294a2">256</text><text x="421.8" y="472.0" font-family="Liberation Sans" font-size="13.6" fill="#9294a2">384</text><text x="421.8" y="562.6" font-family="Liberation Sans" font-size="13.6" fill="#9294a2">512</text><text x="421.8" y="653.2" font-family="Liberation Sans" font-size="13.6" fill="#9294a2">640</text></g></svg>
<!-- toolbar icons -->
<svg class="a" style="left:0;top:0" width="1040" height="64" viewBox="0 0 1040 64">
<path d="M426.5 48 Q434 38.2 441.5 48 Q434 57.8 426.5 48 Z" fill="#eef2fa"/>
<circle cx="434" cy="48" r="3.7" fill="#252b3d"/><circle cx="434" cy="48" r="2.3" fill="#eef2fa"/>
<path fill="#eef2fa" fill-rule="evenodd" d="M455.6 40.6 H470.3 V55.4 H455.6 Z M458.2 43.2 V50.6 H467.7 V43.2 Z"/>
<path d="M459 50 L461.6 47 L463 48.3 L464.6 45.8 L467 50 Z" fill="#eef2fa"/>
<g stroke="#eef2fa" stroke-width="1.9" fill="none">
<path d="M485.9 45 H499.7 M485.9 50.6 H492"/><path d="M489.8 41 V55.2"/><path d="M495.9 41 V45"/>
<path d="M494 55.2 V52.5 Q494 50.6 496 50.6 Q498.4 50.6 498.4 52.5 V55.2"/>
</g>
<path d="M928.8 48 H939.6" stroke="#eef2fa" stroke-width="2.3"/>
<path d="M1023.9 42.6 V53.6 M1018.4 48.1 H1029.4" stroke="#eef2fa" stroke-width="2.3"/>
</svg>


</div>
</body></html>
